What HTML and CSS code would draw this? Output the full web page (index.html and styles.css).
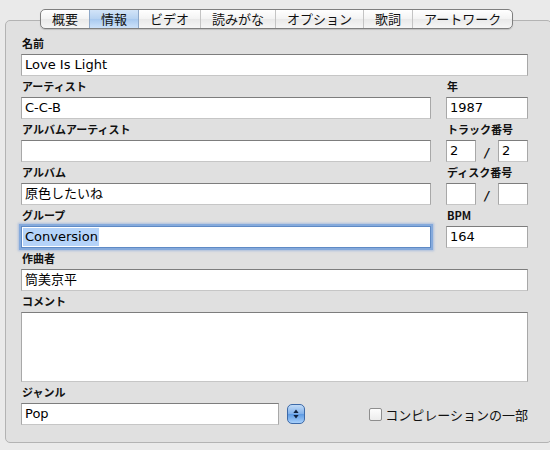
FILE: index.html
```html
<!DOCTYPE html>
<html lang="ja">
<head>
<meta charset="utf-8">
<title>情報</title>
<link rel="stylesheet" href="styles.css">
</head>
<body>
<div class="window">
  <div class="tabs">
    <div class="tab">概要</div>
    <div class="tab active">情報</div>
    <div class="tab">ビデオ</div>
    <div class="tab">読みがな</div>
    <div class="tab">オプション</div>
    <div class="tab">歌詞</div>
    <div class="tab">アートワーク</div>
  </div>
  <div class="panel">
    <div class="grid">
      <div class="cell span2">
        <div class="label">名前</div>
        <div class="input">Love Is Light</div>
      </div>
      <div class="cell">
        <div class="label">アーティスト</div>
        <div class="input">C-C-B</div>
      </div>
      <div class="cell">
        <div class="label">年</div>
        <div class="input">1987</div>
      </div>
      <div class="cell">
        <div class="label">アルバムアーティスト</div>
        <div class="input"></div>
      </div>
      <div class="cell">
        <div class="label">トラック番号</div>
        <div class="pair">
          <div class="input small">2</div>
          <span class="slash">/</span>
          <div class="input small">2</div>
        </div>
      </div>
      <div class="cell">
        <div class="label">アルバム</div>
        <div class="input">原色したいね</div>
      </div>
      <div class="cell">
        <div class="label">ディスク番号</div>
        <div class="pair">
          <div class="input small"></div>
          <span class="slash">/</span>
          <div class="input small"></div>
        </div>
      </div>
      <div class="cell">
        <div class="label">グループ</div>
        <div class="input focused"><span class="selection">Conversion</span></div>
      </div>
      <div class="cell">
        <div class="label">BPM</div>
        <div class="input">164</div>
      </div>
      <div class="cell span2">
        <div class="label">作曲者</div>
        <div class="input">筒美京平</div>
      </div>
      <div class="cell span2">
        <div class="label">コメント</div>
        <div class="input textarea"></div>
      </div>
      <div class="cell span2">
        <div class="label">ジャンル</div>
        <div class="genre-row">
          <div class="input genre">Pop</div>
          <div class="stepper">
            <svg width="18" height="20" viewBox="0 0 18 20">
              <path d="M9 5.5 L11.6 9 L6.4 9 Z" fill="#10233f"/>
              <path d="M9 14.5 L11.6 11 L6.4 11 Z" fill="#10233f"/>
            </svg>
          </div>
          <label class="check"><span class="box"></span>コンピレーションの一部</label>
        </div>
      </div>
    </div>
  </div>
</div>
</body>
</html>
```

FILE: styles.css
```css
html, body {
  margin: 0;
  padding: 0;
  background: #eaeaea;
}
body {
  width: 550px;
  height: 450px;
  overflow: hidden;
  font-family: "DejaVu Sans", "Noto Sans CJK JP", sans-serif;
  color: #000;
}
.window {
  padding: 9px 0 0 5px;
}
.tabs {
  display: flex;
  margin-left: 35px;
  margin-bottom: -9px;
  position: relative;
  z-index: 1;
  width: max-content;
  border: 1px solid #7f7f7f;
  border-radius: 5px;
  overflow: hidden;
  background: linear-gradient(#ffffff, #f3f3f3 50%, #e9e9e9 51%, #f6f6f6);
  box-shadow: 0 1px 1px rgba(0,0,0,0.15);
}
.tab {
  height: 18px;
  line-height: 18px;
  padding: 0 11px;
  font-family: "Noto Sans CJK JP", sans-serif;
  font-size: 13px;
  color: #111;
  border-left: 1px solid #c4c4c4;
}
.tab:first-child {
  border-left: none;
}
.tab.active {
  background: linear-gradient(#d2e4f8, #b6d2f1 50%, #a8c9ef 51%, #cde2fa);
  border-left-color: #8ea8c8;
}
.tab.active + .tab {
  border-left-color: #8ea8c8;
}
.panel {
  width: 519px;
  border: 1px solid #b3b3b3;
  border-radius: 5px;
  background: #e0e0e0;
  padding: 12px 11px 17px 15px;
}
.grid {
  display: grid;
  grid-template-columns: 410px 82px;
  column-gap: 15px;
}
.span2 {
  grid-column: 1 / 3;
}
.label {
  font-family: "Noto Sans CJK JP", sans-serif;
  font-weight: bold;
  font-size: 11px;
  line-height: 15px;
  padding: 3px 0 3px 1px;
  color: #111;
}
.input {
  box-sizing: border-box;
  height: 22px;
  background: #fff;
  border: 1px solid #a8a8a8;
  border-top-color: #7d7d7d;
  border-bottom-color: #c6c6c6;
  font-family: "DejaVu Sans", "Noto Sans CJK JP", sans-serif;
  font-size: 13px;
  line-height: 20px;
  padding: 0 3px;
  white-space: nowrap;
  overflow: hidden;
}
.input.focused {
  border-color: #5f8ac5;
  box-shadow: 0 0 0 2px #85aadc, 0 0 2px 3px rgba(120,160,220,0.5);
  padding-left: 1px;
}
.selection {
  background: #b5d3f9;
  padding: 1px 1px 2px 2px;
}
.pair {
  display: flex;
  align-items: center;
  justify-content: space-between;
}
.input.small {
  width: 30px;
}
.slash {
  font-family: "DejaVu Sans", sans-serif;
  font-weight: bold;
  font-style: italic;
  font-size: 12px;
  padding-top: 4px;
  color: #111;
}
.input.textarea {
  height: 70px;
}
.genre-row {
  display: flex;
  align-items: center;
}
.input.genre {
  width: 258px;
}
.stepper {
  width: 18px;
  height: 20px;
  margin-left: 8px;
  box-sizing: border-box;
  border: 1px solid #3d6aa8;
  border-radius: 5px;
  background: linear-gradient(#c2dbf7, #7fb0ea 50%, #5d9ae3 51%, #a8d0fb);
  display: flex;
}
.stepper svg {
  margin: -1px;
}
.check {
  margin-left: auto;
  display: flex;
  align-items: center;
  font-family: "Noto Sans CJK JP", sans-serif;
  font-size: 13px;
  color: #111;
  padding-top: 1px;
}
.box {
  box-sizing: border-box;
  width: 13px;
  height: 13px;
  margin-right: 3px;
  border: 1px solid #8e8e8e;
  border-radius: 2px;
  background: linear-gradient(#fdfdfd, #ececec);
}
```
